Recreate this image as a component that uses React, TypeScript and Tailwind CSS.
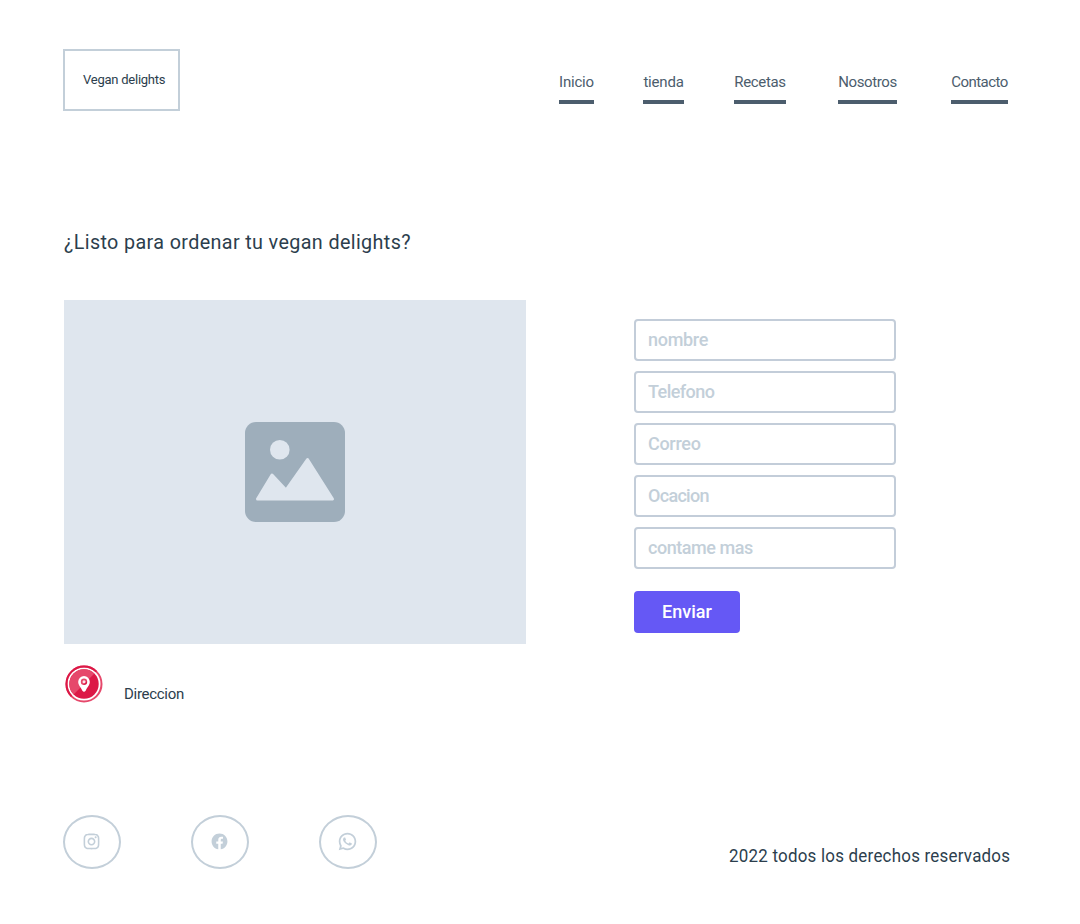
import React from "react";
import { RiInstagramLine, RiFacebookCircleFill, RiWhatsappLine } from "react-icons/ri";

const links = [
  { label: "Inicio", box: "w-[35px]", text: "tracking-[-0.2px]" },
  { label: "tienda", box: "w-[41px] ml-[49px]", text: "tracking-[-0.2px]" },
  { label: "Recetas", box: "w-[52px] ml-[50px]", text: "tracking-[-0.35px]" },
  { label: "Nosotros", box: "w-[59px] ml-[52px]", text: "tracking-[-0.4px]" },
  { label: "Contacto", box: "w-[57px] ml-[54px]", text: "tracking-[-0.55px]" },
];

const fields = [
  { label: "nombre", text: "tracking-[-0.3px]" },
  { label: "Telefono", text: "tracking-[-0.55px]" },
  { label: "Correo", text: "tracking-[-0.3px]" },
  { label: "Ocacion", text: "tracking-[-0.7px]" },
  { label: "contame mas", text: "tracking-[-0.45px]" },
];

const socials = [
  { name: "Instagram", Icon: RiInstagramLine, size: 19 },
  { name: "Facebook", Icon: RiFacebookCircleFill, size: 19 },
  { name: "WhatsApp", Icon: RiWhatsappLine, size: 21 },
];

function PictureIcon() {
  return (
    <svg width="100" height="100" viewBox="0 0 100 100" aria-hidden="true">
      <rect width="100" height="100" rx="11" fill="#9eaebb" />
      <circle cx="34.8" cy="27.8" r="9.8" fill="#dfe6ee" />
      <path
        d="M12.5 77 27 53 41 68 62.5 37.5 87.5 77Z"
        fill="#dfe6ee"
        stroke="#dfe6ee"
        strokeWidth="3"
        strokeLinejoin="round"
      />
    </svg>
  );
}

function LocationBadge() {
  return (
    <svg width="38" height="38" viewBox="0 0 38 38" aria-hidden="true">
      <circle cx="19" cy="19" r="17.5" fill="#fff" stroke="#e6486b" strokeWidth="2" />
      <path d="M6.6 31.4A17.5 17.5 0 0 1 31.4 6.6" fill="none" stroke="#dc1846" strokeWidth="2" />
      <circle cx="19" cy="19" r="14.7" fill="#dc1846" />
      <path d="M8.6 29.4A14.7 14.7 0 0 1 29.4 8.6Z" fill="#e6486b" />
      <path
        fillRule="evenodd"
        d="M19 11a5.8 5.8 0 0 0-5.8 5.8c0 4 3.2 5.6 4 8.8q1.8 2.4 3.6 0C21.6 22.4 24.8 20.8 24.8 16.8a5.8 5.8 0 0 0-5.8-5.8Zm0 2.6a3.2 3.2 0 1 1 0 6.4 3.2 3.2 0 0 1 0-6.4Z"
        fill="#fff"
      />
      <circle cx="19" cy="16.8" r="1.5" fill="#fff" fillOpacity="0.85" />
    </svg>
  );
}

export default function App() {
  return (
    <div className="flex h-[924px] w-[1080px] flex-col overflow-hidden bg-white pl-[63px] font-['Roboto','Liberation_Sans',sans-serif] text-[#2c3e4d]">
      <header className="flex h-[111px] pt-[49px]">
        <div className="flex h-[62px] w-[117px] items-center border-2 border-[#c3cfd9] pl-[18px] text-[13px] leading-5">
          <span className="whitespace-nowrap tracking-[-0.24px]">Vegan delights</span>
        </div>
        <nav className="ml-[379px] flex pt-[23px]">
          {links.map(({ label, box, text }) => (
            <a
              key={label}
              href="#"
              className={`${box} h-8 border-b-4 border-[#4c5d6d] text-center text-[15px] leading-5 whitespace-nowrap text-[#4c5d6d]`}
            >
              <span className={text}>{label}</span>
            </a>
          ))}
        </nav>
      </header>

      <h1 className="mt-[117px] h-7 pl-px text-[21px] leading-7 whitespace-nowrap">
        <span className="inline-block origin-left scale-x-[0.94] tracking-[0.4px]">¿Listo para ordenar tu vegan delights?</span>
      </h1>

      <main className="mt-[44px] flex h-[344px] pl-px">
        <div className="flex h-[344px] w-[462px] items-center justify-center bg-[#dfe6ee]">
          <PictureIcon />
        </div>
        <form className="ml-[108px] flex w-[262px] flex-col pt-[19px]">
          <div className="flex flex-col gap-2.5">
            {fields.map(({ label, text }) => (
              <input
                key={label}
                aria-label={label}
                placeholder={label}
                className={`${text} h-[42px] w-full rounded border-2 border-[#c3cdd9] px-3 pb-0.5 text-[18px] font-medium placeholder:text-[#c3cfd9]`}
              />
            ))}
          </div>
          <button
            type="button"
            className="mt-[22px] h-[42px] w-[106px] rounded bg-[#6558f5] pb-0.5 text-[18px] font-medium text-white"
          >
            Enviar
          </button>
        </form>
      </main>

      <div className="mt-[21px] flex h-[38px] pl-[2px]">
        <LocationBadge />
        <span className="mt-[19px] ml-[21px] text-[15px] leading-5 whitespace-nowrap tracking-[-0.3px]">Direccion</span>
      </div>

      <footer className="mt-[112px] flex h-[54px]">
        <div className="flex gap-[70px]">
          {socials.map(({ name, Icon, size }) => (
            <a
              key={name}
              href="#"
              aria-label={name}
              className="flex h-[54px] w-[58px] items-center justify-center rounded-[50%] border-2 border-[#c3cfd9] pr-px pb-px text-[#c3cfd9]"
            >
              <Icon size={size} />
            </a>
          ))}
        </div>
        <p className="mt-[29px] ml-[352px] w-[281px] text-[18px] leading-6 whitespace-nowrap">
          <span className="inline-block origin-left scale-x-[0.94] tracking-[0.25px]">2022 todos los derechos reservados</span>
        </p>
      </footer>
    </div>
  );
}
